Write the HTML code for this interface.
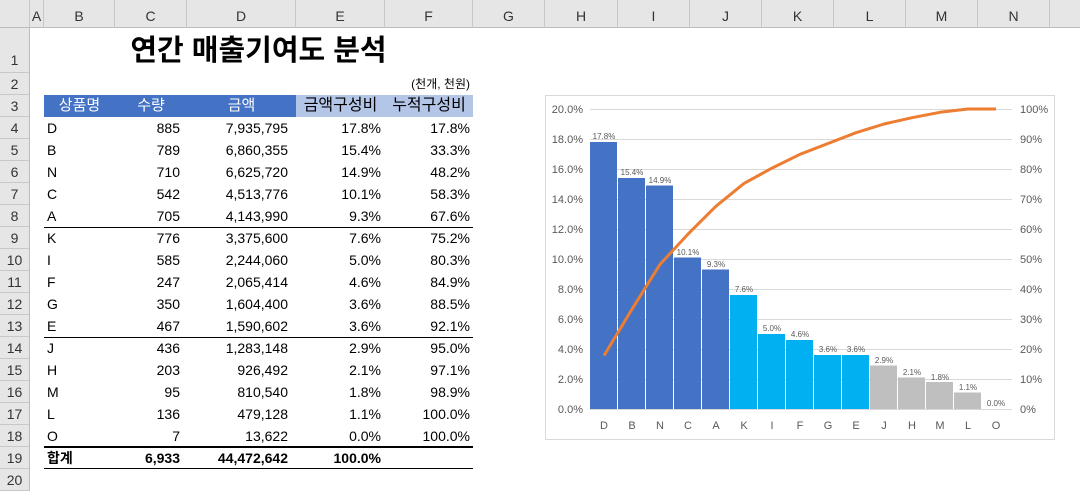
<!DOCTYPE html>
<html><head><meta charset="utf-8"><style>
*{margin:0;padding:0;box-sizing:border-box}
body{width:1080px;height:478px;overflow:hidden;background:#fff;font-family:"Liberation Sans","Noto Sans CJK KR",sans-serif;position:relative;color:#000}
.ch{position:absolute;top:0;height:28px;background:#e6e6e6;border-right:1px solid #c8c8c8;border-bottom:1px solid #bdbdbd;font-size:14px;color:#333;text-align:center;line-height:32px}
.rh{position:absolute;left:0;width:30px;background:#e6e6e6;border-bottom:1px solid #c8c8c8;border-right:1px solid #bdbdbd;font-size:14px;color:#333;text-align:center}
.c{position:absolute;font-size:14px;height:22px;line-height:22px;white-space:nowrap}
.r{text-align:right}
.hl{position:absolute;left:44px;width:429px;background:#000}
</style></head><body>
<div class="ch" style="left:0;width:30px"></div>
<div class="ch" style="left:30px;width:14px">A</div>
<div class="ch" style="left:44px;width:71px">B</div>
<div class="ch" style="left:115px;width:72px">C</div>
<div class="ch" style="left:187px;width:109px">D</div>
<div class="ch" style="left:296px;width:89px">E</div>
<div class="ch" style="left:385px;width:88px">F</div>
<div class="ch" style="left:473px;width:72px">G</div>
<div class="ch" style="left:545px;width:73px">H</div>
<div class="ch" style="left:618px;width:72px">I</div>
<div class="ch" style="left:690px;width:72px">J</div>
<div class="ch" style="left:762px;width:72px">K</div>
<div class="ch" style="left:834px;width:72px">L</div>
<div class="ch" style="left:906px;width:72px">M</div>
<div class="ch" style="left:978px;width:72px">N</div>
<div class="ch" style="left:1050px;width:40px"></div>

<div class="rh" style="top:28px;height:45px;line-height:64px">1</div>
<div class="rh" style="top:73px;height:22px;line-height:22px">2</div>
<div class="rh" style="top:95px;height:22px;line-height:22px">3</div>
<div class="rh" style="top:117px;height:22px;line-height:22px">4</div>
<div class="rh" style="top:139px;height:22px;line-height:22px">5</div>
<div class="rh" style="top:161px;height:22px;line-height:22px">6</div>
<div class="rh" style="top:183px;height:22px;line-height:22px">7</div>
<div class="rh" style="top:205px;height:22px;line-height:22px">8</div>
<div class="rh" style="top:227px;height:22px;line-height:22px">9</div>
<div class="rh" style="top:249px;height:22px;line-height:22px">10</div>
<div class="rh" style="top:271px;height:22px;line-height:22px">11</div>
<div class="rh" style="top:293px;height:22px;line-height:22px">12</div>
<div class="rh" style="top:315px;height:22px;line-height:22px">13</div>
<div class="rh" style="top:337px;height:22px;line-height:22px">14</div>
<div class="rh" style="top:359px;height:22px;line-height:22px">15</div>
<div class="rh" style="top:381px;height:22px;line-height:22px">16</div>
<div class="rh" style="top:403px;height:22px;line-height:22px">17</div>
<div class="rh" style="top:425px;height:22px;line-height:22px">18</div>
<div class="rh" style="top:447px;height:22px;line-height:22px">19</div>
<div class="rh" style="top:469px;height:22px;line-height:22px">20</div>

<div class="c" style="left:44px;width:429px;top:31px;height:40px;line-height:40px;text-align:center;font-size:29px;font-weight:bold">연간 매출기여도 분석</div>
<div class="c r" style="left:385px;width:85px;top:73px;font-size:12px">(천개, 천원)</div>

<div style="position:absolute;left:44px;top:95px;width:252px;height:22px;background:#4472c4"></div>
<div style="position:absolute;left:296px;top:95px;width:177px;height:22px;background:#b4c6e7"></div>
<div class="c" style="left:44px;width:71px;top:95px;text-align:center;color:#fff;font-size:15px">상품명</div>
<div class="c" style="left:115px;width:72px;top:95px;text-align:center;color:#fff;font-size:15px">수량</div>
<div class="c" style="left:187px;width:109px;top:95px;text-align:center;color:#fff;font-size:15px">금액</div>
<div class="c" style="left:296px;width:89px;top:95px;text-align:center;font-size:16px">금액구성비</div>
<div class="c" style="left:385px;width:88px;top:95px;text-align:center;font-size:16px">누적구성비</div>

<div style="position:absolute;left:0;top:117px">
<div class="c" style="left:47px;top:0">D</div><div class="c r" style="left:115px;width:65px;top:0">885</div><div class="c r" style="left:187px;width:101px;top:0">7,935,795</div><div class="c r" style="left:296px;width:85px;top:0">17.8%</div><div class="c r" style="left:385px;width:85px;top:0">17.8%</div>
<div class="c" style="left:47px;top:22px">B</div><div class="c r" style="left:115px;width:65px;top:22px">789</div><div class="c r" style="left:187px;width:101px;top:22px">6,860,355</div><div class="c r" style="left:296px;width:85px;top:22px">15.4%</div><div class="c r" style="left:385px;width:85px;top:22px">33.3%</div>
<div class="c" style="left:47px;top:44px">N</div><div class="c r" style="left:115px;width:65px;top:44px">710</div><div class="c r" style="left:187px;width:101px;top:44px">6,625,720</div><div class="c r" style="left:296px;width:85px;top:44px">14.9%</div><div class="c r" style="left:385px;width:85px;top:44px">48.2%</div>
<div class="c" style="left:47px;top:66px">C</div><div class="c r" style="left:115px;width:65px;top:66px">542</div><div class="c r" style="left:187px;width:101px;top:66px">4,513,776</div><div class="c r" style="left:296px;width:85px;top:66px">10.1%</div><div class="c r" style="left:385px;width:85px;top:66px">58.3%</div>
<div class="c" style="left:47px;top:88px">A</div><div class="c r" style="left:115px;width:65px;top:88px">705</div><div class="c r" style="left:187px;width:101px;top:88px">4,143,990</div><div class="c r" style="left:296px;width:85px;top:88px">9.3%</div><div class="c r" style="left:385px;width:85px;top:88px">67.6%</div>
<div class="c" style="left:47px;top:110px">K</div><div class="c r" style="left:115px;width:65px;top:110px">776</div><div class="c r" style="left:187px;width:101px;top:110px">3,375,600</div><div class="c r" style="left:296px;width:85px;top:110px">7.6%</div><div class="c r" style="left:385px;width:85px;top:110px">75.2%</div>
<div class="c" style="left:47px;top:132px">I</div><div class="c r" style="left:115px;width:65px;top:132px">585</div><div class="c r" style="left:187px;width:101px;top:132px">2,244,060</div><div class="c r" style="left:296px;width:85px;top:132px">5.0%</div><div class="c r" style="left:385px;width:85px;top:132px">80.3%</div>
<div class="c" style="left:47px;top:154px">F</div><div class="c r" style="left:115px;width:65px;top:154px">247</div><div class="c r" style="left:187px;width:101px;top:154px">2,065,414</div><div class="c r" style="left:296px;width:85px;top:154px">4.6%</div><div class="c r" style="left:385px;width:85px;top:154px">84.9%</div>
<div class="c" style="left:47px;top:176px">G</div><div class="c r" style="left:115px;width:65px;top:176px">350</div><div class="c r" style="left:187px;width:101px;top:176px">1,604,400</div><div class="c r" style="left:296px;width:85px;top:176px">3.6%</div><div class="c r" style="left:385px;width:85px;top:176px">88.5%</div>
<div class="c" style="left:47px;top:198px">E</div><div class="c r" style="left:115px;width:65px;top:198px">467</div><div class="c r" style="left:187px;width:101px;top:198px">1,590,602</div><div class="c r" style="left:296px;width:85px;top:198px">3.6%</div><div class="c r" style="left:385px;width:85px;top:198px">92.1%</div>
<div class="c" style="left:47px;top:220px">J</div><div class="c r" style="left:115px;width:65px;top:220px">436</div><div class="c r" style="left:187px;width:101px;top:220px">1,283,148</div><div class="c r" style="left:296px;width:85px;top:220px">2.9%</div><div class="c r" style="left:385px;width:85px;top:220px">95.0%</div>
<div class="c" style="left:47px;top:242px">H</div><div class="c r" style="left:115px;width:65px;top:242px">203</div><div class="c r" style="left:187px;width:101px;top:242px">926,492</div><div class="c r" style="left:296px;width:85px;top:242px">2.1%</div><div class="c r" style="left:385px;width:85px;top:242px">97.1%</div>
<div class="c" style="left:47px;top:264px">M</div><div class="c r" style="left:115px;width:65px;top:264px">95</div><div class="c r" style="left:187px;width:101px;top:264px">810,540</div><div class="c r" style="left:296px;width:85px;top:264px">1.8%</div><div class="c r" style="left:385px;width:85px;top:264px">98.9%</div>
<div class="c" style="left:47px;top:286px">L</div><div class="c r" style="left:115px;width:65px;top:286px">136</div><div class="c r" style="left:187px;width:101px;top:286px">479,128</div><div class="c r" style="left:296px;width:85px;top:286px">1.1%</div><div class="c r" style="left:385px;width:85px;top:286px">100.0%</div>
<div class="c" style="left:47px;top:308px">O</div><div class="c r" style="left:115px;width:65px;top:308px">7</div><div class="c r" style="left:187px;width:101px;top:308px">13,622</div><div class="c r" style="left:296px;width:85px;top:308px">0.0%</div><div class="c r" style="left:385px;width:85px;top:308px">100.0%</div>
<div class="c" style="left:47px;top:330px;font-weight:bold">합계</div><div class="c r" style="left:115px;width:65px;top:330px;font-weight:bold">6,933</div><div class="c r" style="left:187px;width:101px;top:330px;font-weight:bold">44,472,642</div><div class="c r" style="left:296px;width:85px;top:330px;font-weight:bold">100.0%</div>
</div>
<div class="hl" style="top:227px;height:1px"></div>
<div class="hl" style="top:337px;height:1px"></div>
<div class="hl" style="top:446px;height:2px"></div>
<div class="hl" style="top:468px;height:1px"></div>

<svg style="position:absolute;left:0;top:0" width="1080" height="478" font-family="Liberation Sans, sans-serif">
<rect x="545.5" y="95.5" width="509" height="344" fill="#fff" stroke="#d9d9d9"/>
<g stroke="#d9d9d9" stroke-width="1">
<line x1="590" x2="1012" y1="109.5" y2="109.5"/><line x1="590" x2="1012" y1="139.5" y2="139.5"/><line x1="590" x2="1012" y1="169.5" y2="169.5"/><line x1="590" x2="1012" y1="199.5" y2="199.5"/><line x1="590" x2="1012" y1="229.5" y2="229.5"/><line x1="590" x2="1012" y1="259.5" y2="259.5"/><line x1="590" x2="1012" y1="289.5" y2="289.5"/><line x1="590" x2="1012" y1="319.5" y2="319.5"/><line x1="590" x2="1012" y1="349.5" y2="349.5"/><line x1="590" x2="1012" y1="379.5" y2="379.5"/><line x1="590" x2="1012" y1="409.5" y2="409.5"/>
</g>
<g font-size="11" fill="#595959" text-anchor="end">
<text x="583" y="113">20.0%</text><text x="583" y="143">18.0%</text><text x="583" y="173">16.0%</text><text x="583" y="203">14.0%</text><text x="583" y="233">12.0%</text><text x="583" y="263">10.0%</text><text x="583" y="293">8.0%</text><text x="583" y="323">6.0%</text><text x="583" y="353">4.0%</text><text x="583" y="383">2.0%</text><text x="583" y="413">0.0%</text>
</g>
<g font-size="11" fill="#595959">
<text x="1020" y="113">100%</text><text x="1020" y="143">90%</text><text x="1020" y="173">80%</text><text x="1020" y="203">70%</text><text x="1020" y="233">60%</text><text x="1020" y="263">50%</text><text x="1020" y="293">40%</text><text x="1020" y="323">30%</text><text x="1020" y="353">20%</text><text x="1020" y="383">10%</text><text x="1020" y="413">0%</text>
</g>
<g>
<rect x="590" y="142" width="27" height="267" fill="#4472c4"/>
<rect x="618" y="178" width="27" height="231" fill="#4472c4"/>
<rect x="646" y="185.5" width="27" height="223.5" fill="#4472c4"/>
<rect x="674" y="257.5" width="27" height="151.5" fill="#4472c4"/>
<rect x="702" y="269.5" width="27" height="139.5" fill="#4472c4"/>
<rect x="730" y="295" width="27" height="114" fill="#00b0f0"/>
<rect x="758" y="334" width="27" height="75" fill="#00b0f0"/>
<rect x="786" y="340" width="27" height="69" fill="#00b0f0"/>
<rect x="814" y="355" width="27" height="54" fill="#00b0f0"/>
<rect x="842" y="355" width="27" height="54" fill="#00b0f0"/>
<rect x="870" y="365.5" width="27" height="43.5" fill="#bfbfbf"/>
<rect x="898" y="377.5" width="27" height="31.5" fill="#bfbfbf"/>
<rect x="926" y="382" width="27" height="27" fill="#bfbfbf"/>
<rect x="954" y="392.5" width="27" height="16.5" fill="#bfbfbf"/>
</g>
<g font-size="8" fill="#595959" text-anchor="middle">
<text x="604" y="139">17.8%</text><text x="632" y="175">15.4%</text><text x="660" y="183">14.9%</text><text x="688" y="255">10.1%</text><text x="716" y="267">9.3%</text><text x="744" y="292">7.6%</text><text x="772" y="331">5.0%</text><text x="800" y="337">4.6%</text><text x="828" y="352">3.6%</text><text x="856" y="352">3.6%</text><text x="884" y="363">2.9%</text><text x="912" y="375">2.1%</text><text x="940" y="380">1.8%</text><text x="968" y="390">1.1%</text><text x="996" y="406">0.0%</text>
</g>
<polyline fill="none" stroke="#ed7d31" stroke-width="3" stroke-linejoin="round" points="604,355.6 632,309.1 660,264.4 688,234.1 716,206.2 744,183.4 772,168.1 800,154.3 828,143.5 856,132.7 884,124 912,117.7 940,112.3 968,109 996,109"/>
<g font-size="11" fill="#595959" text-anchor="middle">
<text x="604" y="429">D</text><text x="632" y="429">B</text><text x="660" y="429">N</text><text x="688" y="429">C</text><text x="716" y="429">A</text><text x="744" y="429">K</text><text x="772" y="429">I</text><text x="800" y="429">F</text><text x="828" y="429">G</text><text x="856" y="429">E</text><text x="884" y="429">J</text><text x="912" y="429">H</text><text x="940" y="429">M</text><text x="968" y="429">L</text><text x="996" y="429">O</text>
</g>
</svg>
</body></html>
